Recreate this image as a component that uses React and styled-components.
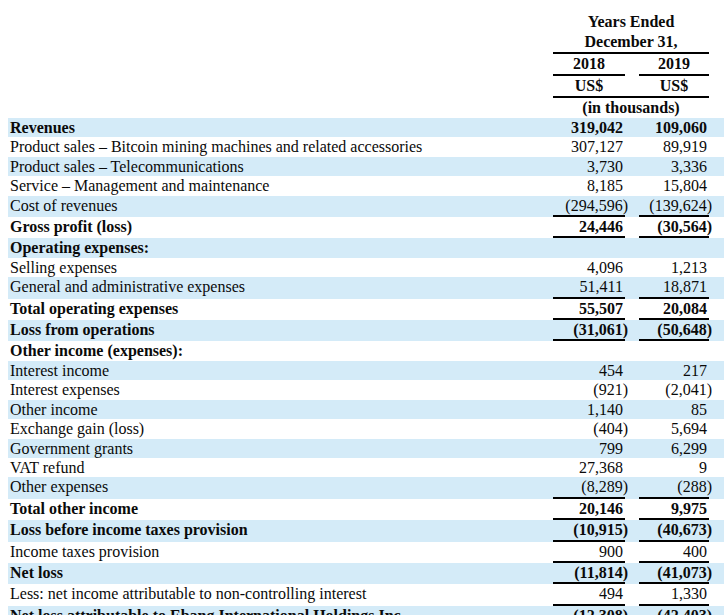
import React from "react";
import styled, { createGlobalStyle, css } from "styled-components";

const GlobalStyle = createGlobalStyle`
  html, body { background: #ffffff; }
  body {
    margin: 8px 0 0 8px;
    font-family: "Liberation Serif", "Times New Roman", serif;
    font-size: 16px;
    color: #0a0a0a;
    overflow: hidden;
  }
`;

const Sheet = styled.div`
  display: flex;
  flex-direction: column;
  width: 716px;
`;

const gridCols = css`
  display: grid;
  grid-template-columns: minmax(0, 1fr) 72px 70px;
  column-gap: 14px;
  padding-right: 15px;
`;

const Header = styled.div`
  ${gridCols};
  padding-top: 4px;
  font-weight: bold;
  line-height: 20px;
`;

const HeadSpan = styled.div`
  grid-column: 2 / 4;
  text-align: center;
  ${(p) => p.$rule && "border-bottom: 2px solid #000;"}
`;

const HeadCell = styled.div`
  text-align: center;
  ${(p) => p.$rule && "border-bottom: 2px solid #000;"}
`;

const HeadPair = styled.div`
  grid-column: 2 / 4;
  display: grid;
  grid-template-columns: 72px 70px;
  column-gap: 14px;
  border-bottom: 2px solid #000;
`;

const Blank = styled.div`
  grid-column: 1;
`;

const Row = styled.div`
  ${gridCols};
  line-height: 19.4px;
  background: ${(p) => (p.$shaded ? "#d4ebf8" : "transparent")};
  font-weight: ${(p) => (p.$bold ? "bold" : "normal")};
`;

const Label = styled.div`
  padding-left: 2px;
  white-space: nowrap;
`;

const Num = styled.div`
  text-align: right;
  padding-right: 2px;
  white-space: nowrap;
  border-bottom: ${(p) => (p.$rule ? "2px solid #000" : "none")};
`;

const Close = styled.span`
  margin-right: -5px;
`;

const rows = [
  { label: "Revenues", a: "319,042", b: "109,060", bold: true },
  { label: "Product sales \u2013 Bitcoin mining machines and related accessories", a: "307,127", b: "89,919" },
  { label: "Product sales \u2013 Telecommunications", a: "3,730", b: "3,336" },
  { label: "Service \u2013 Management and maintenance", a: "8,185", b: "15,804" },
  { label: "Cost of revenues", a: "(294,596)", b: "(139,624)", rule: true },
  { label: "Gross profit (loss)", a: "24,446", b: "(30,564)", bold: true, rule: true },
  { label: "Operating expenses:", a: "", b: "", bold: true },
  { label: "Selling expenses", a: "4,096", b: "1,213" },
  { label: "General and administrative expenses", a: "51,411", b: "18,871", rule: true },
  { label: "Total operating expenses", a: "55,507", b: "20,084", bold: true, rule: true },
  { label: "Loss from operations", a: "(31,061)", b: "(50,648)", bold: true, rule: true },
  { label: "Other income (expenses):", a: "", b: "", bold: true },
  { label: "Interest income", a: "454", b: "217" },
  { label: "Interest expenses", a: "(921)", b: "(2,041)" },
  { label: "Other income", a: "1,140", b: "85" },
  { label: "Exchange gain (loss)", a: "(404)", b: "5,694" },
  { label: "Government grants", a: "799", b: "6,299" },
  { label: "VAT refund", a: "27,368", b: "9" },
  { label: "Other expenses", a: "(8,289)", b: "(288)", rule: true },
  { label: "Total other income", a: "20,146", b: "9,975", bold: true, rule: true },
  { label: "Loss before income taxes provision", a: "(10,915)", b: "(40,673)", bold: true, rule: true },
  { label: "Income taxes provision", a: "900", b: "400", rule: true },
  { label: "Net loss", a: "(11,814)", b: "(41,073)", bold: true, rule: true },
  { label: "Less: net income attributable to non-controlling interest", a: "494", b: "1,330", rule: true },
  { label: "Net loss attributable to Ebang International Holdings Inc.", a: "(12,308)", b: "(42,403)", bold: true, rule: true },
];

function Value({ v }) {
  if (v.endsWith(")")) {
    return (
      <>
        {v.slice(0, -1)}
        <Close>)</Close>
      </>
    );
  }
  return <>{v}</>;
}

export default function App() {
  return (
    <>
      <GlobalStyle />
      <Sheet>
        <Header>
          <Blank />
          <HeadSpan>Years Ended</HeadSpan>
          <Blank />
          <HeadSpan $rule>December 31,</HeadSpan>
          <Blank />
          <HeadCell $rule>2018</HeadCell>
          <HeadCell $rule>2019</HeadCell>
          <Blank />
          <HeadPair>
            <HeadCell>US$</HeadCell>
            <HeadCell>US$</HeadCell>
          </HeadPair>
          <Blank />
          <HeadSpan>(in thousands)</HeadSpan>
        </Header>
        {rows.map((r, i) => (
          <Row key={r.label} $shaded={i % 2 === 0} $bold={r.bold}>
            <Label>{r.label}</Label>
            <Num $rule={r.rule}>
              <Value v={r.a} />
            </Num>
            <Num $rule={r.rule}>
              <Value v={r.b} />
            </Num>
          </Row>
        ))}
      </Sheet>
    </>
  );
}
